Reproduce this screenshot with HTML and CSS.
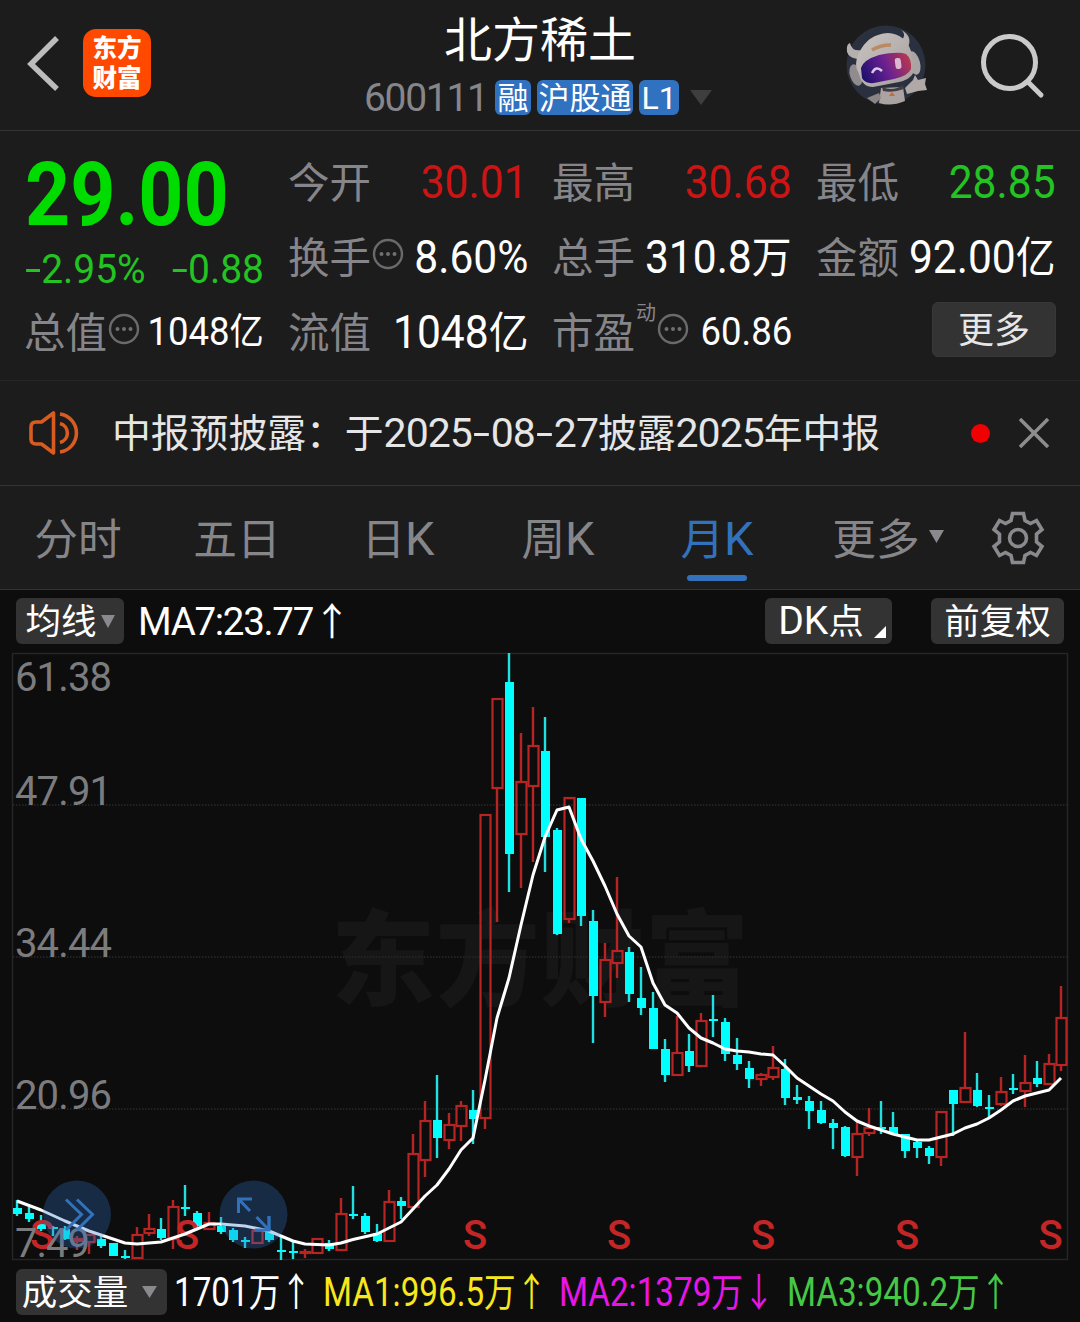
FILE: index.html
```
<!DOCTYPE html>
<html lang="zh-CN">
<head>
<meta charset="utf-8">
<title>北方稀土 600111</title>
<link rel="stylesheet" href="styles.css">
</head>
<body>
<header class="header">
  <div class="header-left">
    <svg class="back" width="36" height="60" viewBox="0 0 36 60"><path d="M31 5 5 31 31 56" fill="none" stroke="#bcbcbc" stroke-width="5.5"/></svg>
    <div class="logo"><span>东方</span><span>财富</span></div>
  </div>
  <div class="header-title">
    <h1>北方稀土</h1>
    <div class="code-row">
      <span class="code">600111</span>
      <span class="badge b-rong">融</span>
      <span class="badge b-hgt">沪股通</span>
      <span class="badge b-l1">L1</span>
      <svg class="caret" width="22" height="15" viewBox="0 0 22 15"><path d="M0 0H22L11 15Z" fill="#3e3e3e"/></svg>
    </div>
  </div>
  <div class="header-right">
    <svg class="robot" width="84" height="82" viewBox="0 0 84 82">
      <defs>
        <linearGradient id="visor" x1="0" y1=".6" x2="1" y2=".3"><stop offset="0" stop-color="#22106f"/><stop offset=".5" stop-color="#6a2190"/><stop offset="1" stop-color="#b8384f"/></linearGradient>
        <linearGradient id="shell" x1="0" y1="0" x2="1" y2="1"><stop offset="0" stop-color="#c9c4c2"/><stop offset="1" stop-color="#a39c9b"/></linearGradient>
      </defs>
      <circle cx="41" cy="40" r="39.500" fill="#2a303e"/>
      <path d="M36 63 34 78Q46 82 60 76L58 62Z" fill="#aaa3a1"/>
      <path d="M37 62Q48 67 58 60L59 64Q48 68 38 66Z" fill="#413d42"/>
      <path d="M47 67 50 71 44 71Z" fill="#c86a35"/>
      <path d="M60 63 68 55 70 50 73 55 81 53 80 59 82 65 73 66 62 69Z" fill="#b0a9a7"/>
      <path d="M22 73 34 68 36 73 30 79Z" fill="#8b8583"/>
      <path d="M5 18Q1 19 2 27Q4 33 13 34L17 25Q7 27 5 18Z" fill="#b5afad"/>
      <path d="M56 5Q63 10 54 18L63 22Q68 11 56 5Z" fill="#b5afad"/>
      <ellipse cx="11" cy="50" rx="6" ry="11" transform="rotate(-18 11 50)" fill="#918b8d"/>
      <ellipse cx="69" cy="38" rx="6" ry="12" transform="rotate(-15 69 38)" fill="#aaa4a4"/>
      <path d="M14 28Q23 9 43 8Q60 9 66 26L70 43Q68 54 54 57L28 62Q17 62 14 49Q8 40 14 28Z" fill="url(#shell)"/>
      <path d="M16 43Q18 35 34 30Q53 26 61 29Q67 34 66 44Q63 51 49 54L29 58Q20 59 17 53Z" fill="url(#visor)"/>
      <path d="M27 48Q31 40 37 46" fill="none" stroke="#d6c9e8" stroke-width="2.500"/>
      <rect x="50" y="33" width="6" height="11" rx="2.500" fill="#dcb7cf" transform="rotate(-7 53 37)"/>
      <path d="M27 25Q35 20 46 20" fill="none" stroke="#b98a63" stroke-width="3.500"/>
    </svg>
    <svg class="search" width="68" height="70" viewBox="0 0 68 70"><circle cx="30.500" cy="31.500" r="26" fill="none" stroke="#cacaca" stroke-width="5"/><path d="M49 51 62 64" stroke="#cacaca" stroke-width="5" stroke-linecap="round"/></svg>
  </div>
</header>

<section class="quote">
  <div class="price-cell">
    <div class="price">29.00</div>
    <div class="change"><span class="pc"><em>-</em>2.95%</span><span class="pv"><em>-</em>0.88</span></div>
  </div>
  <div class="stat"><span class="label">今开</span><span class="num red">30.01</span></div>
  <div class="stat"><span class="label">最高</span><span class="num red">30.68</span></div>
  <div class="stat"><span class="label">最低</span><span class="num green">28.85</span></div>
  <div class="stat"><span class="label">换手<svg class="dots" viewBox="0 0 32 32"><circle cx="16" cy="16" r="14" fill="none" stroke="#6a6a6a" stroke-width="2.400"/><g fill="#707070"><circle cx="9.500" cy="16" r="2"/><circle cx="16" cy="16" r="2"/><circle cx="22.500" cy="16" r="2"/></g></svg></span><span class="num">8.60%</span></div>
  <div class="stat"><span class="label">总手</span><span class="num">310.8<i>万</i></span></div>
  <div class="stat"><span class="label">金额</span><span class="num">92.00<i>亿</i></span></div>
  <div class="stat"><span class="label">总值<svg class="dots" viewBox="0 0 32 32"><circle cx="16" cy="16" r="14" fill="none" stroke="#6a6a6a" stroke-width="2.400"/><g fill="#707070"><circle cx="9.500" cy="16" r="2"/><circle cx="16" cy="16" r="2"/><circle cx="22.500" cy="16" r="2"/></g></svg></span><span class="num small">1048<i>亿</i></span></div>
  <div class="stat"><span class="label">流值</span><span class="num">1048<i>亿</i></span></div>
  <div class="stat"><span class="label">市盈<sup>动</sup><svg class="dots" viewBox="0 0 32 32"><circle cx="16" cy="16" r="14" fill="none" stroke="#6a6a6a" stroke-width="2.400"/><g fill="#707070"><circle cx="9.500" cy="16" r="2"/><circle cx="16" cy="16" r="2"/><circle cx="22.500" cy="16" r="2"/></g></svg></span><span class="num small">60.86</span></div>
  <div class="stat more-cell"><button class="more">更多</button></div>
</section>

<section class="notice">
  <svg class="horn" width="54" height="46" viewBox="0 0 54 46"><g fill="none" stroke="#d85c1f" stroke-width="3.600"><path d="M25.500 3V43L13.500 34H8Q3 34 3 29V17Q3 12 8 12H13.500Z" stroke-linejoin="round"/><path d="M32 13.500A9.800 9.800 0 0 1 32 32.500M32 4A19.200 19.200 0 0 1 32 42"/></g></svg>
  <p>中报预披露：于<span class="date">2025<em>-</em>08<em>-</em>27</span>披露<span class="date">2025</span>年中报</p>
  <span class="dot"></span>
  <svg class="close" width="30" height="30" viewBox="0 0 30 30"><path d="M1 1 29 29M29 1 1 29" stroke="#8d8d8d" stroke-width="3.500"/></svg>
</section>

<nav class="tabs">
  <span class="tab">分时</span>
  <span class="tab">五日</span>
  <span class="tab">日<b>K</b></span>
  <span class="tab">周<b>K</b></span>
  <span class="tab active">月<b>K</b></span>
  <span class="tab">更多<svg width="15" height="13" viewBox="0 0 15 13"><path d="M0 0H15L7.500 13Z" fill="#8a8a8e"/></svg></span>
  <span class="tab"><svg class="gear" width="54" height="54" viewBox="-27 -27 54 54"><g fill="none" stroke="#8a8a8e" stroke-width="3.600"><path d="M-5.500-24.500H5.500L7-17.500 12.500-14.500 18.500-17.500 24-8.500 18.500-4V4L24 8.500 18.500 17.500 12.500 14.500 7 17.500 5.500 24.500H-5.500L-7 17.500-12.500 14.500-18.500 17.500-24 8.500-18.500 4V-4L-24-8.500-18.500-17.500-12.500-14.500-7-17.500Z"/><circle r="8.500"/></g></svg></span>
</nav>

<section class="chart-bar">
  <span class="chip ma"><span class="up2">均线</span><svg width="14" height="13" viewBox="0 0 14 13"><path d="M0 0H14L7 13Z" fill="#8a8a8e"/></svg></span>
  <span class="ma-value">MA7:23.77<i>↑</i></span>
  <span class="chip dk"><b>DK</b><span class="up2">点</span><svg width="12" height="12" viewBox="0 0 12 12"><path d="M12 0V12H0Z" fill="#fff"/></svg></span>
  <span class="chip fq"><span class="up2">前复权</span></span>
</section>

<svg class="chart" id="chart" width="1080" height="614" viewBox="0 648 1080 614">
  <text class="watermark" x="331" y="998" textLength="418">东方财富</text>
  <path class="frame" d="M12.500 653.500H1067.500V1259.500H12.500Z"/>
  <path class="grid" d="M13 805H1067M13 957H1067M13 1109H1067"/>
  <g id="candles"></g>
  <g class="signal">
    <text x="42" y="1249">S</text><text x="187" y="1249">S</text><text x="475" y="1249">S</text><text x="619" y="1249">S</text><text x="763" y="1249">S</text><text x="907" y="1249">S</text><text x="1050.500" y="1249">S</text>
  </g>
  <path id="ma" class="ma-line"/>
  <g class="axis">
    <text x="15" y="691" textLength="97">61.38</text>
    <text x="15" y="805" textLength="97">47.91</text>
    <text x="15" y="957" textLength="97">34.44</text>
    <text x="15" y="1109" textLength="97">20.96</text>
    <text x="15" y="1257" textLength="75">7.49</text>
  </g>
  <g class="tools">
    <circle cx="77" cy="1214.500" r="34"/><circle cx="253.500" cy="1214.500" r="34"/>
    <path d="M66 1199.500 81.500 1214.500 66 1230M77 1199.500 92.500 1214.500 77 1230"/>
    <path d="M238.500 1213V1199H252M238.500 1199 250 1211M256.500 1217 269 1230M269 1216V1230H255"/>
  </g>
</svg>

<section class="volume-bar">
  <span class="chip vol"><span class="up2">成交量</span><svg width="15" height="12" viewBox="0 0 15 12"><path d="M0 0H15L7.500 12Z" fill="#8a8a8e"/></svg></span>
  <span class="vol-item v0"><span>1701<i>万↑</i></span></span>
  <span class="vol-item v1"><span>MA1:996.5<i>万↑</i></span></span>
  <span class="vol-item v2"><span>MA2:1379<i>万↓</i></span></span>
  <span class="vol-item v3"><span>MA3:940.2<i>万↑</i></span></span>
</section>
<script src="chart.js"></script>
</body>
</html>
```
FILE: styles.css
```
* { box-sizing: border-box; margin: 0; padding: 0; }
body {
  width: 1080px;
  height: 1322px;
  background: #0d0d0d;
  color: #fff;
  font-family: "Noto Sans CJK SC", sans-serif;
  overflow: hidden;
}
svg { display: block; flex: none; }
i, em { font-style: normal; }
b { font-weight: 400; font-family: Roboto, sans-serif; }
em { display: inline-block; width: 17px; transform: scaleX(1.5); text-align: center; }

.header {
  display: grid;
  grid-template-columns: 364px 352px 364px;
  height: 131px;
  background: #1c1c1c;
  border-bottom: 1px solid #333;
}
.header-left { display: flex; gap: 21px; padding: 29px 0 0 26px; }
.back { margin-top: 4px; }
.logo {
  width: 68px;
  height: 68px;
  border-radius: 13px;
  background: #ff4800;
  display: flex;
  flex-direction: column;
  align-items: center;
  padding-top: 3px;
}
.logo span { font-size: 24.500px; font-weight: 900; line-height: 29.500px; }
.header-title h1 {
  height: 80px;
  line-height: 72px;
  font-size: 48px;
  font-weight: 400;
  text-align: center;
}
.code-row { display: flex; height: 35px; align-items: center; gap: 6px; }
.code { width: 125px; font: 39px/36px Roboto, sans-serif; letter-spacing: -1.3px; color: #86868a; }
.badge {
  height: 35px;
  border-radius: 6px;
  background: #3172c0;
  font-size: 31px;
  line-height: 31px;
  text-align: center;
  white-space: nowrap;
}
.b-rong { width: 36px; }
.b-hgt { width: 96px; }
.b-l1 { width: 40px; font: 32px/36px Roboto, sans-serif; }
.caret { margin-left: 5px; }
.header-right { display: flex; padding: 25px 0 0 129px; }
.search { margin: 6px 0 0 50px; }

.quote {
  display: grid;
  grid-template-columns: repeat(4, 239px);
  grid-template-rows: 75px 75px 75px;
  column-gap: 25px;
  height: 250px;
  padding: 13px 25px 0 25px;
  background: #1c1c1c;
  border-bottom: 1px solid #262626;
}
.price-cell { grid-row: 1 / 3; }
.price {
  height: 98px;
  font: 700 89px/102px Roboto, sans-serif;
  color: #00dc00;
  transform: scaleX(.885);
  transform-origin: left;
}
.change {
  display: flex;
  justify-content: space-between;
  font: 41px/54px Roboto, sans-serif;
  color: #22c322;
}
.pc, .pv { white-space: nowrap; transform: scaleX(.95); transform-origin: left; }
.pv { transform-origin: right; }
.stat { display: flex; justify-content: space-between; align-items: center; height: 75px; white-space: nowrap; }
.label { display: flex; align-items: center; height: 75px; font-size: 41.5px; line-height: 70px; padding-bottom: 4px; margin-left: -1px; color: #86868a; }
.label sup { font-size: 20px; line-height: 30px; align-self: flex-start; margin: 3px 0 0 1px; }
.dots { width: 32px; height: 32px; margin: -1px 0 0 1px; }
.num { font: 46px/76px Roboto, sans-serif; transform: scaleX(.925); transform-origin: right; margin-left: -14px; }
.num i { font: 43px/70px "Noto Sans CJK SC", sans-serif; }
.num.small { font-size: 39.500px; }
.num.small i { font-size: 37px; }
.red { color: #cd1414; }
.green { color: #22c322; }
.more-cell { justify-content: flex-end; }
.more {
  width: 124px;
  height: 55px;
  margin-top: -4px;
  padding-bottom: 6px;
  border: 1px solid #383838;
  border-radius: 6px;
  background: #333;
  color: #e6e6e6;
  font: 36px/46px "Noto Sans CJK SC", sans-serif;
}

.notice {
  display: flex;
  align-items: center;
  height: 105px;
  padding-left: 28px;
  background: #1c1c1c;
  border-bottom: 1px solid #333;
}
.notice p { width: 770px; height: 104px; margin-left: 30px; font-size: 38.800px; line-height: 99px; color: #e6e6e6; white-space: nowrap; }
.date { font: 41px/99px Roboto, sans-serif; letter-spacing: -1px; }
.date em { width: 19px; letter-spacing: 0; }
.dot { width: 19px; height: 19px; border-radius: 50%; background: #f00000; margin: 0 29px 0 89px; }

.tabs {
  display: grid;
  grid-template-columns: 158px 160px 162px 158px 160px 182px 76px;
  height: 104px;
  background: #1c1c1c;
  border-bottom: 1px solid #333;
}
.tab { display: flex; justify-content: center; align-items: center; height: 103px; padding: 0 2px 3px 0; font-size: 43.700px; color: #86868a; position: relative; }
.tab b { font-size: 47px; padding-top: 4px; }
.tab svg { margin-left: 9px; }
.tab .gear { margin: 3px 0 0 2px; }
.active { color: #3272bd; }
.active::after {
  content: "";
  position: absolute;
  left: 49px;
  bottom: 8px;
  width: 60px;
  height: 6px;
  border-radius: 3px;
  background: #3272bd;
}

.chart-bar { display: flex; align-items: flex-start; height: 58px; padding: 8px 0 0 16px; }
.chip {
  display: flex;
  align-items: center;
  justify-content: center;
  height: 46px;
  border-radius: 6px;
  background: #333;
  font-size: 35.500px;
  line-height: 40px;
  white-space: nowrap;
}
.up2 { padding-bottom: 4px; }
.chip.ma { width: 108px; gap: 4px; }
.ma-value { width: 627px; margin-left: 14px; font: 38.500px/42px Roboto, sans-serif; letter-spacing: -1.3px; white-space: nowrap; }
.ma-value i { font: 38px/42px "Noto Sans CJK SC", sans-serif; }
.chip.dk { width: 127px; padding-left: 7px; }
.dk b { font-size: 39px; }
.dk svg { align-self: flex-end; margin: 0 0 6px 10px; }
.chip.fq { width: 133px; margin-left: 39px; }

.watermark { font: 900 104px "Noto Sans CJK SC", sans-serif; fill: #161616; }
.frame { fill: none; stroke: #262626; stroke-width: 1.500; }
.grid { stroke: #2a2a2a; stroke-width: 1.500; stroke-dasharray: 1.500 1.500; }
.up { fill: none; stroke: #b82424; stroke-width: 2.200; }
.down { fill: #00ffff; }
.wick-up { stroke: #b82424; stroke-width: 2.400; }
.wick-down { stroke: #20e0e0; stroke-width: 2.400; }
.signal text { font: 500 40px Roboto, sans-serif; fill: #c42626; text-anchor: middle; }
.ma-line { fill: none; stroke: #fff; stroke-width: 3; stroke-linejoin: round; }
.axis text { font: 40px Roboto, sans-serif; fill: #7c7c7e; }
.tools circle { fill: #2e72c8; fill-opacity: .3; }
.tools path { fill: none; stroke: #3272bd; stroke-width: 3; }

.volume-bar { display: flex; height: 60px; padding: 7px 0 0 16px; }
.chip.vol { width: 151px; gap: 14px; padding-right: 4px; }
.vol-item { height: 46px; white-space: nowrap; font: 41px/41px Roboto, sans-serif; }
.vol-item span { display: inline-block; transform: scaleX(.81); transform-origin: left; }
.vol-item i { font: 39px/41px "Noto Sans CJK SC", sans-serif; }
.v0 { width: 149px; margin-left: 7px; }
.v1 { width: 236px; color: #f8e71c; }
.v2 { width: 228px; color: #e815e8; }
.v3 { width: 228px; color: #46c846; }
```
FILE: chart.js
```
// Monthly candles: [direction, high, bodyTop, bodyBottom, low] in chart units.
const candles = [
  ["d",1200,1208,1214,1216],["d",1207,1213,1219,1222],["d",1215,1223,1229,1231],["d",1226,1227,1229,1236],
  ["d",1226,1229,1239,1240],["u",1236,1239,1241,1250],["u",1235,1235,1242,1254],["d",1235,1239,1246,1248],
  ["d",1243,1243,1256,1256],["d",1250,1256,1258,1259],["u",1227,1235,1258,1258],["u",1214,1229,1233,1236],
  ["d",1218,1229,1238,1240],["u",1200,1207,1239,1249],["d",1185,1207,1209,1216],["d",1211,1213,1226,1228],
  ["u",1212,1223,1229,1230],["d",1217,1226,1232,1234],["d",1228,1230,1240,1242],["d",1237,1240,1242,1248],
  ["u",1231,1231,1243,1243],["d",1216,1231,1240,1242],["d",1237,1250,1252,1260],["d",1242,1251,1253,1259],
  ["u",1249,1252,1253,1258],["u",1238,1239,1253,1253],["d",1240,1243,1249,1251],["u",1198,1214,1250,1250],
  ["d",1186,1214,1216,1219],["d",1213,1216,1232,1234],["d",1224,1233,1241,1242],["u",1190,1202,1241,1241],
  ["d",1197,1201,1206,1219],["u",1134,1154,1207,1207],["u",1101,1121,1160,1177],["d",1075,1120,1138,1158],
  ["u",1113,1125,1140,1149],["u",1101,1106,1126,1141],["d",1090,1110,1119,1144],["u",815,815,1118,1129],
  ["u",699,699,788,922],["d",653,682,854,892],["u",733,782,834,888],["u",707,746,786,862],
  ["d",717,751,837,872],["d",828,830,934,935],["u",798,798,919,923],["d",798,798,916,926],
  ["d",910,921,996,1043],["u",943,960,1002,1017],["u",877,951,963,978],["d",947,952,994,1002],
  ["d",967,998,1008,1015],["d",992,1008,1049,1049],["d",1039,1049,1075,1082],["u",1016,1053,1075,1075],
  ["d",1034,1051,1066,1072],["u",1013,1021,1066,1066],["d",995,1019,1021,1037],["d",1018,1022,1054,1061],
  ["d",1038,1055,1064,1070],["d",1061,1068,1079,1088],["u",1073,1075,1079,1086],["u",1046,1068,1077,1080],
  ["d",1059,1069,1098,1105],["d",1085,1097,1100,1104],["d",1096,1101,1111,1129],["d",1101,1110,1123,1124],
  ["d",1119,1123,1128,1149],["d",1126,1127,1156,1157],["u",1120,1134,1157,1176],["u",1108,1128,1133,1136],
  ["d",1101,1127,1129,1134],["d",1112,1127,1134,1135],["d",1134,1134,1151,1158],["d",1139,1142,1148,1158],
  ["d",1146,1148,1156,1164],["u",1112,1112,1157,1166],["d",1090,1090,1104,1136],["u",1032,1088,1102,1102],
  ["d",1073,1090,1106,1107],["d",1095,1107,1109,1117],["u",1077,1092,1104,1106],["d",1074,1088,1090,1094],
  ["u",1055,1083,1091,1107],["d",1061,1078,1084,1087],["u",1054,1064,1084,1084],["u",986,1018,1065,1071]
];
const average = [
  [17,1201],[41,1210],[65,1221],[89,1231],[107,1237],[125,1243],[137,1244],[161,1242],[185,1234],[209,1224],
  [221,1224],[245,1226],[269,1231],[293,1241],[305,1244],[329,1245],[341,1243],[353,1239.5],[377,1234],[389,1228],
  [401,1222],[413,1209],[425,1196],[437,1185],[449,1169],[461,1150],[473,1138],[485,1080],[497,1018],[509,978],
  [521,925],[533,875],[545,837],[557,810],[569,807],[581,839],[593,861],[605,886],[617,914],[629,936],[641,947],
  [653,983],[665,1005],[677,1013],[689,1028],[701,1038],[713,1043],[725,1049],[737,1051],[749,1052],[761,1054],
  [773,1055],[785,1066],[797,1078],[809,1086],[821,1094],[833,1101],[845,1112],[857,1121],[869,1126],[881,1130],
  [893,1134],[905,1137],[917,1140],[929,1140],[941,1137],[953,1134],[965,1128],[977,1124],[989,1118],[1001,1110],
  [1013,1101],[1025,1096],[1037,1093],[1049,1090],[1061,1078]
];
let marks = "";
candles.forEach(([dir, high, top, bottom, low], i) => {
  const x = 17 + i * 12;
  if (dir === "u") {
    marks += `<path class="wick-up" d="M${x} ${high}V${top}M${x} ${bottom}V${low}"/>`;
    marks += `<rect class="up" x="${x - 4.5}" y="${top}" width="10" height="${bottom - top}"/>`;
  } else {
    marks += `<path class="wick-down" d="M${x} ${high}V${low}"/>`;
    marks += `<rect class="down" x="${x - 4}" y="${top}" width="9" height="${bottom - top}"/>`;
  }
});
document.getElementById("candles").innerHTML = marks;
document.getElementById("ma").setAttribute("d", "M" + average.map(p => p.join(" ")).join("L"));
```
